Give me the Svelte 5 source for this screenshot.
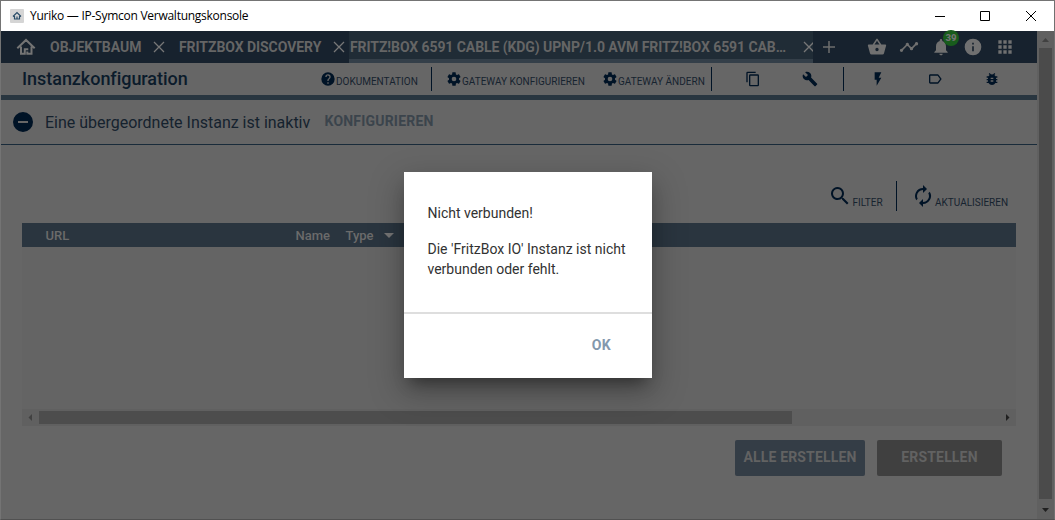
<script>
  const icons = {
    help: 'M12 2a10 10 0 1 0 0 20 10 10 0 0 0 0-20zm1 17h-2v-2h2v2zm2.1-7.8-.9.9C13.4 12.900 13 13.500 13 15h-2v-.5c0-1.100.4-2.100 1.200-2.800l1.200-1.300A2 2 0 1 0 10 9H8a4 4 0 0 1 8 0c0 .9-.4 1.700-.9 2.200z',
    gear: 'M12 15.500A3.500 3.500 0 1 1 12 8.500a3.500 3.500 0 0 1 0 7m7.430-2.530c.04-.32.07-.64.07-.97s-.03-.66-.07-1l2.110-1.630c.19-.15.24-.42.12-.64l-2-3.460c-.12-.22-.39-.31-.61-.22l-2.490 1c-.52-.39-1.060-.73-1.690-.98l-.37-2.650A.506.506 0 0 0 14 2h-4c-.25 0-.46.18-.5.42l-.37 2.650c-.63.25-1.170.59-1.690.98l-2.490-1c-.22-.09-.49 0-.61.22l-2 3.460c-.13.22-.07.49.12.64L4.570 11c-.04.34-.07.67-.07 1s.03.65.07.97l-2.110 1.660c-.19.15-.25.42-.12.64l2 3.460c.12.22.39.3.61.22l2.490-1.010c.52.4 1.060.74 1.690.99l.37 2.650c.04.24.25.42.5.42h4c.25 0 .46-.18.5-.42l.37-2.650c.63-.26 1.170-.59 1.690-.99l2.490 1.010c.22.08.49 0 .61-.22l2-3.460c.12-.22.07-.49-.12-.64z',
    copy: 'M16 1H4a2 2 0 0 0-2 2v14h2V3h12V1zm3 4H8a2 2 0 0 0-2 2v14a2 2 0 0 0 2 2h11a2 2 0 0 0 2-2V7a2 2 0 0 0-2-2zm0 16H8V7h11v14z',
    wrench: 'M22.700 19l-9.100-9.100c.9-2.300.4-5-1.500-6.900-2-2-5-2.400-7.400-1.300L9 6 6 9 1.600 4.700C.4 7.100.9 10.100 2.900 12.100c1.900 1.900 4.600 2.400 6.900 1.500l9.100 9.100c.4.4 1 .4 1.400 0l2.300-2.300c.5-.4.5-1.100.1-1.400z',
    flash: 'M7 2v11h3v9l7-12h-4l4-8z',
    label: 'M17.630 5.840C17.270 5.330 16.670 5 16 5L5 5.010C3.900 5.010 3 5.900 3 7v10c0 1.100.9 1.990 2 1.990L16 19c.67 0 1.270-.33 1.630-.84L22 12l-4.370-6.160zM16 17H5V7h11l3.550 5L16 17z',
    bug: 'M20 8h-2.810a5.985 5.985 0 0 0-1.820-1.960L17 4.410 15.590 3l-2.170 2.170a6 6 0 0 0-2.830 0L8.410 3 7 4.410l1.620 1.630C7.880 6.550 7.260 7.220 6.810 8H4v2h2.090c-.05.33-.09.66-.09 1v1H4v2h2v1c0 .34.04.67.09 1H4v2h2.810a5.999 5.999 0 0 0 10.380 0H20v-2h-2.090c.05-.33.09-.66.09-1v-1h2v-2h-2v-1c0-.34-.04-.67-.09-1H20V8zm-6 8h-4v-2h4v2zm0-4h-4v-2h4v2z',
    basket: 'M17.210 9l-4.380-6.560a1 1 0 0 0-1.660.01L6.790 9H2c-.55 0-1 .45-1 1 0 .09.01.18.04.27l2.540 9.270A2 2 0 0 0 5.500 21h13a2 2 0 0 0 1.930-1.460l2.540-9.270L23 10c0-.55-.45-1-1-1h-4.790zM9 9l3-4.400L15 9H9zm3 8a2 2 0 1 1 0-4 2 2 0 0 1 0 4z',
    chart: 'M23 8a2 2 0 0 1-2.510 1.930l-3.560 3.550c.05.16.07.34.07.52a2 2 0 1 1-4 0c0-.18.02-.36.07-.52l-2.550-2.550a2 2 0 0 1-1.040 0l-4.550 4.560c.05.16.07.33.07.51a2 2 0 1 1-2-2c.18 0 .35.02.51.07l4.560-4.550A2 2 0 1 1 12 9c0 .18-.02.36-.07.52l2.550 2.550a2 2 0 0 1 1.040 0l3.550-3.560A2 2 0 1 1 23 8z',
    bell: 'M12 22c1.100 0 2-.9 2-2h-4a2 2 0 0 0 2 2zm6-6v-5c0-3.070-1.640-5.640-4.500-6.320V4a1.500 1.500 0 0 0-3 0v.68C7.630 5.360 6 7.920 6 11v5l-2 2v1h16v-1z',
    info: 'M12 2a10 10 0 1 0 0 20 10 10 0 0 0 0-20zm1 15h-2v-6h2v6zm0-8h-2V7h2v2z',
    apps: 'M4 8h4V4H4v4zm6 12h4v-4h-4v4zm-6 0h4v-4H4v4zm0-6h4v-4H4v4zm6 0h4v-4h-4v4zm6-10v4h4V4h-4zm-6 4h4V4h-4v4zm6 6h4v-4h-4v4zm0 6h4v-4h-4v4z',
    search: 'M15.500 14h-.79l-.28-.27A6.500 6.500 0 1 0 13.730 14.430l.27.28v.79l5 4.990L20.490 19zM9.500 14a4.500 4.500 0 1 1 0-9 4.500 4.500 0 0 1 0 9z',
    renew: 'M12 6v3l4-4-4-4v3a8 8 0 0 0-6.760 12.260L6.700 14.800A5.900 5.900 0 0 1 6 12a6 6 0 0 1 6-6zm6.760 1.740L17.300 9.200A6 6 0 0 1 12 18v-3l-4 4 4 4v-3a8 8 0 0 0 6.760-12.260z',
    minus: 'M12 2a10 10 0 1 0 0 20 10 10 0 0 0 0-20zm5 11H7v-2h10v2z'
  };
</script>

{#snippet icon(name, size)}
  <svg class="icon" width={size} height={size} viewBox="0 0 24 24"><path d={icons[name]} /></svg>
{/snippet}
{#snippet cross()}
  <svg class="cross" width="12" height="12" viewBox="0 0 12 12"><path d="M1 1l10 10M11 1L1 11" /></svg>
{/snippet}

<div class="window">
  <header class="titlebar">
    <svg class="appicon" width="14" height="14" viewBox="0 0 14 14"><rect width="14" height="14" rx="1" fill="#d5d5d5" /><path d="M3 7.500L7 3.500l4 4M4.500 7v3h2M9.500 7v3H7V7.500" fill="none" stroke="#284c68" stroke-width="1.200" /></svg>
    <span class="apptitle">Yuriko — IP-Symcon Verwaltungskonsole</span>
    <svg class="controls" width="104" height="12" viewBox="0 0 104 12"><path d="M1 6.500h10M46.500 1.500h9v9h-9zM92 1l10 10M102 1L92 11" /></svg>
  </header>

  <div class="body">
    <div class="page">
      <nav>
        <svg class="home" width="20" height="18" viewBox="0 0 20 18"><path d="M1.300 10.300L10 2l8.700 8.300M5 8.500v7.300h3.800v-4.600h3.500M15.500 8.500v7.300h-4.200v-2.300" /></svg>
        <div class="tab first"><span>OBJEKTBAUM</span>{@render cross()}</div>
        <div class="tab second"><span>FRITZBOX DISCOVERY</span>{@render cross()}</div>
        <div class="tab active"><span>FRITZ!BOX 6591 CABLE (KDG) UPNP/1.0 AVM FRITZ!BOX 6591 CAB…</span>{@render cross()}</div>
        <svg class="plus" width="12" height="12" viewBox="0 0 12 12"><path d="M6 0v12M0 6h12" /></svg>
        <div class="navicons">
          {@render icon('basket', 20)}
          {@render icon('chart', 20)}
          <div class="bell">{@render icon('bell', 20)}<b>39</b></div>
          {@render icon('info', 20)}
          {@render icon('apps', 20)}
        </div>
      </nav>

      <div class="toolbar">
        <h1>Instanzkonfiguration</h1>
        <div class="tool doc">{@render icon('help', 16)}<span>DOKUMENTATION</span></div>
        <i class="sep"></i>
        <div class="tool conf">{@render icon('gear', 16)}<span>GATEWAY KONFIGURIEREN</span></div>
        <div class="tool change">{@render icon('gear', 16)}<span>GATEWAY ÄNDERN</span></div>
        <i class="sep"></i>
        <div class="pair">{@render icon('copy', 16)}{@render icon('wrench', 16)}</div>
        <i class="sep"></i>
        <div class="trio">{@render icon('flash', 16)}{@render icon('label', 16)}{@render icon('bug', 16)}</div>
      </div>

      <div class="notice">
        {@render icon('minus', 24)}
        <span>Eine übergeordnete Instanz ist inaktiv</span>
        <b>KONFIGURIEREN</b>
      </div>

      <div class="actions">
        <div class="action filter">{@render icon('search', 24)}<span>FILTER</span></div>
        <i></i>
        <div class="action refresh">{@render icon('renew', 24)}<span>AKTUALISIEREN</span></div>
      </div>

      <section class="table">
        <div class="thead">
          <span class="url">URL</span><span class="name">Name</span><span class="type">Type</span>
          <svg width="10" height="5" viewBox="0 0 10 5"><path d="M0 0h10L5 5z" /></svg>
        </div>
        <div class="tbody"></div>
        <div class="hscroll">
          <svg width="17" height="17" viewBox="0 0 17 17"><path d="M10 5v7L6.500 8.500z" fill="#414141" /></svg>
          <div class="htrack"><div class="hthumb"></div></div>
          <svg width="17" height="17" viewBox="0 0 17 17"><path d="M7 5v7l3.500-3.500z" fill="#202020" /></svg>
        </div>
      </section>

      <footer>
        <div class="btn primary">ALLE ERSTELLEN</div>
        <div class="btn disabled">ERSTELLEN</div>
      </footer>
    </div>

    <div class="vscroll">
      <svg width="17" height="17" viewBox="0 0 17 17"><path d="M5 11h7L8.500 7z" fill="#414141" /></svg>
      <div class="vthumb"></div>
      <svg width="17" height="20" viewBox="0 0 17 20"><path d="M5 9h7l-3.500 4z" fill="#202020" /></svg>
    </div>
  </div>

  <div class="dialog">
    <div class="message">
      <p>Nicht verbunden!</p>
      <p>Die 'FritzBox IO' Instanz ist nicht verbunden oder fehlt.</p>
    </div>
    <div class="buttons">OK</div>
  </div>
</div>

<style>
  :global(body) { background: #666; }
  * { box-sizing: border-box; }
  .window { position: relative; width: 1055px; height: 520px; border: 1px solid #747474; border-right-color: #707070; border-bottom-color: #515151; font-family: Roboto, sans-serif; color: #0b1b2b; background: #666; overflow: hidden; display: flex; flex-direction: column; white-space: nowrap; }
  svg { display: block; flex: none; }
  .icon { fill: currentColor; }
  .titlebar { height: 30px; flex: none; background: #fff; display: flex; align-items: center; padding-left: 9px; color: #000; }
  .apptitle { font: 12px/16px "Open Sans", sans-serif; letter-spacing: -0.26px; margin-left: 6px; flex: 1; }
  .controls { margin-right: 16px; fill: none; stroke: #000; stroke-width: 1; }
  .body { display: flex; flex: 1; min-height: 0; }
  .page { width: 1036px; flex: none; }
  nav { height: 32px; background: #17222e; color: #656565; display: flex; align-items: center; font-size: 14px; font-weight: 700; }
  .home { margin-left: 15px; width: 20px; fill: none; stroke: #747474; stroke-width: 2; }
  .tab { height: 32px; display: flex; align-items: center; justify-content: space-between; }
  .cross { fill: none; stroke: #777; stroke-width: 1.300; }
  .first { margin-left: 14px; width: 114.5px; }
  .second { margin-left: 14.5px; width: 166px; letter-spacing: -0.06px; }
  .active { margin-left: 4px; width: 464px; background: #202c36; border-bottom: 4px solid #343f49; padding-top: 4px; overflow: hidden; letter-spacing: -0.08px; }
  .active span { padding-left: 1px; }
  .active :global(.cross) { margin-right: -2px; }
  .plus { margin-left: 10px; stroke: #6d6d6d; stroke-width: 1.500; }
  .navicons { display: flex; gap: 12px; margin-left: 32px; color: #707070; }
  .bell { position: relative; }
  .bell b { position: absolute; left: 12px; top: -7px; width: 16px; height: 16px; border-radius: 8px; background: #185c1c; color: #737373; font-size: 9.500px; line-height: 16px; text-align: center; }
  .toolbar { height: 37px; border-bottom: 5px solid #293640; display: flex; align-items: center; color: #001326; }
  h1 { margin: 0 0 0 21px; width: 298px; font-size: 18px; line-height: 24px; font-weight: 500; letter-spacing: -0.04px; color: #0b1b2b; }
  .tool { display: flex; align-items: center; }
  .tool span { font-size: 10px; line-height: 12px; margin-top: 5px; color: #16232f; }
  .doc { width: 111px; }
  .sep { width: 1px; height: 24px; background: #001326; }
  .conf { margin-left: 14px; width: 156px; }
  .change { width: 109px; }
  .pair { width: 131px; padding-left: 33px; display: flex; gap: 41px; }
  .trio { padding-left: 26px; display: flex; gap: 41px; }
  .notice { height: 45px; border-bottom: 1px solid #192b3a; display: flex; align-items: center; padding-left: 10px; color: #001326; }
  .notice span { margin-left: 10px; width: 279px; font-size: 16px; letter-spacing: -0.01px; color: #15222e; }
  .notice b { font-size: 14px; letter-spacing: 0.2px; margin: -2px 0 0 0.5px; color: #3b444c; }
  .actions { margin-top: 36px; height: 30px; display: flex; color: #001326; }
  .action { display: flex; align-items: center; }
  .action span { font-size: 10px; line-height: 12px; color: #16232f; margin-top: 13px; }
  .filter { margin-left: 827px; width: 68px; gap: 0.5px; }
  .actions i { width: 1px; background: #001326; }
  .refresh { margin-left: 14px; }
  .table { margin: 12px 0 0 21px; width: 994px; }
  .thead { height: 24px; background: #2a353f; color: #6b6b6b; display: flex; align-items: center; font-size: 13px; font-weight: 500; padding-left: 23.5px; }
  .url { width: 250px; } .name { width: 50px; } .type { width: 38.5px; }
  .thead svg { fill: #747474; }
  .tbody { height: 162px; background: #646464; }
  .hscroll { height: 17px; background: #606060; display: flex; }
  .htrack { flex: 1; padding: 2px 0; }
  .hthumb { width: 753px; height: 13px; background: #4d4d4d; }
  footer { margin: 14px 35px 0 0; display: flex; justify-content: flex-end; gap: 12px; }
  .btn { height: 36px; border-radius: 2px; display: flex; align-items: center; justify-content: center; font-size: 14px; font-weight: 700; color: #626262; letter-spacing: 0.16px; padding-bottom: 2px; }
  .primary { width: 130px; background: #343d46; }
  .disabled { width: 125px; background: #404040; }
  .vscroll { width: 17px; background: #606060; display: flex; flex-direction: column; }
  .vthumb { width: 13px; margin-left: 2px; flex: 1; background: #4b4b4b; }
  .dialog { position: absolute; left: 403px; top: 171px; width: 248px; height: 206px; background: #fff; color: #323232; white-space: normal; box-shadow: 0 11px 15px -7px rgba(0,0,0,.4), 0 12px 30px 3px rgba(0,0,0,.25); }
  .message { height: 142px; border-bottom: 2px solid #dedede; padding: 31px 20px 0 23.5px; font-size: 14px; line-height: 20px; }
  p { margin: 0 0 16px; }
  .buttons { height: 62px; display: flex; align-items: center; justify-content: flex-end; padding-right: 41px; font-size: 14px; font-weight: 700; letter-spacing: 0.3px; color: #8398ad; }
</style>
